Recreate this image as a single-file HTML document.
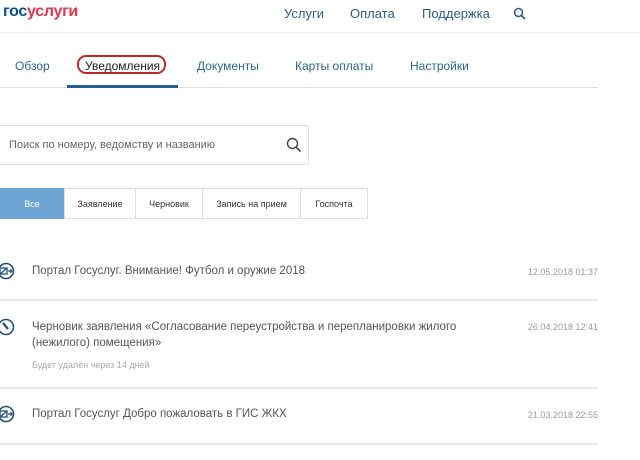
<!DOCTYPE html>
<html><head><meta charset="utf-8"><style>
body{margin:0;width:640px;height:460px;background:#fff;font-family:"Liberation Sans","Noto Sans CJK SC",sans-serif;position:relative;overflow:hidden}
.a{position:absolute;white-space:nowrap}
.nav{color:#2b5b84;font-size:13px;top:6px}
.tab{color:#2b6590;font-size:12px;top:59px}
.btn{position:absolute;top:188px;height:31px;border:1px solid #ddd;box-sizing:border-box;font-size:9px;color:#333;text-align:center;line-height:30px;background:#fff}
.t{color:#555;font-size:11.5px}
.d{color:#999;font-size:9px;right:42px}
.sep{position:absolute;left:0;width:598px;height:2px;background:#e8e8e8}
</style></head><body>
<div class="a" style="left:3px;top:3px;font-size:16px;font-weight:bold;letter-spacing:-0.3px"><span style="color:#0d4c8b">гос</span><span style="color:#e5344b">услуги</span></div>
<div class="a nav" style="left:284px">Услуги</div>
<div class="a nav" style="left:350px">Оплата</div>
<div class="a nav" style="left:422px">Поддержка</div>
<svg class="a" style="left:513px;top:7px" width="14" height="14" viewBox="0 0 14 14"><circle cx="5.5" cy="5.5" r="4" fill="none" stroke="#2b5b84" stroke-width="1.5"/><path d="M8.5 8.5L12 12" stroke="#2b5b84" stroke-width="1.6"/></svg>
<div style="position:absolute;left:0;top:32px;width:640px;height:1px;background:#f0f0f0"></div>
<div class="a tab" style="left:15px">Обзор</div>
<div class="a" style="left:77px;top:55px;width:89px;height:19px;border:2px solid #c0282d;border-radius:9px;box-sizing:border-box"></div>
<div class="a" style="left:85px;top:59px;font-size:12px;color:#222">Уведомления</div>
<div class="a tab" style="left:197px">Документы</div>
<div class="a tab" style="left:295px">Карты оплаты</div>
<div class="a tab" style="left:410px">Настройки</div>
<div style="position:absolute;left:0;top:87px;width:598px;height:1px;background:#ddd"></div>
<div style="position:absolute;left:67px;top:85px;width:111px;height:3px;background:#1f5f94"></div>
<div style="position:absolute;left:-4px;top:125px;width:313px;height:40px;border:1px solid #ddd;border-radius:3px;box-sizing:border-box"></div>
<div class="a" style="left:9px;top:139px;font-size:11px;color:#666">Поиск по номеру, ведомству и названию</div>
<svg class="a" style="left:286px;top:137px" width="16" height="16" viewBox="0 0 16 16"><circle cx="6.5" cy="6.5" r="5" fill="none" stroke="#444" stroke-width="1.4"/><path d="M10 10L14.5 14.5" stroke="#444" stroke-width="1.6"/></svg>
<div class="btn" style="left:0;width:64px;background:#6da6d4;border-color:#6da6d4;color:#fff">Все</div>
<div class="btn" style="left:64px;width:72px">Заявление</div>
<div class="btn" style="left:135px;width:68px">Черновик</div>
<div class="btn" style="left:202px;width:99px">Запись на прием</div>
<div class="btn" style="left:300px;width:68px">Госпочта</div>
<svg class="a" style="left:-2px;top:262px" width="18" height="18" viewBox="0 0 18 18"><circle cx="8" cy="9" r="7.5" fill="none" stroke="#1f4f7a" stroke-width="1.5"/><rect x="2" y="6" width="7" height="6" fill="none" stroke="#1f4f7a" stroke-width="1.3"/><path d="M2 12L9 6M10 9h5M13 7v4" stroke="#1f4f7a" stroke-width="1.3"/></svg>
<div class="a t" style="left:32px;top:265px">Портал Госуслуг. Внимание! Футбол и оружие 2018</div>
<div class="a d" style="top:267px">12.05.2018 01:37</div>
<div class="sep" style="top:299px"></div>
<svg class="a" style="left:-2px;top:318px" width="18" height="18" viewBox="0 0 18 18"><circle cx="8" cy="9" r="7.5" fill="none" stroke="#1f4f7a" stroke-width="1.5"/><path d="M5 5L10 11" stroke="#1f4f7a" stroke-width="2.2"/></svg>
<div class="a t" style="left:32px;top:321px">Черновик заявления «Согласование переустройства и перепланировки жилого</div>
<div class="a t" style="left:32px;top:337px">(нежилого) помещения»</div>
<div class="a" style="left:32px;top:360px;font-size:9px;color:#aaa">Будет удалён через 14 дней</div>
<div class="a d" style="top:322px">26.04.2018 12:41</div>
<div class="sep" style="top:387px"></div>
<svg class="a" style="left:-2px;top:405px" width="18" height="18" viewBox="0 0 18 18"><circle cx="8" cy="9" r="7.5" fill="none" stroke="#1f4f7a" stroke-width="1.5"/><rect x="2" y="6" width="7" height="6" fill="none" stroke="#1f4f7a" stroke-width="1.3"/><path d="M2 12L9 6M10 9h5M13 7v4" stroke="#1f4f7a" stroke-width="1.3"/></svg>
<div class="a t" style="left:32px;top:408px">Портал Госуслуг Добро пожаловать в ГИС ЖКХ</div>
<div class="a d" style="top:410px">21.03.2018 22:55</div>
<div class="sep" style="top:443px"></div>
</body></html>
